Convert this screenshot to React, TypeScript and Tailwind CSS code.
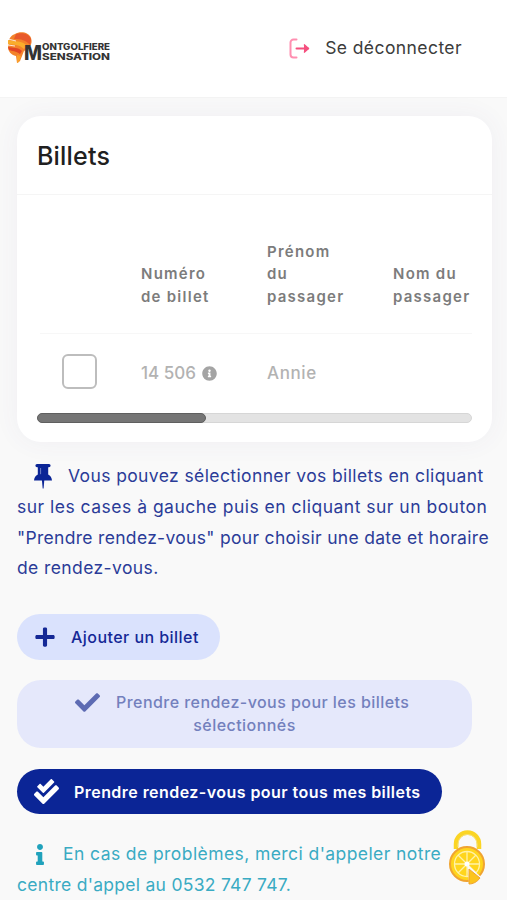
import React from "react";
import {
  FaCheck,
  FaCheckDouble,
  FaInfo,
  FaInfoCircle,
  FaPlus,
} from "react-icons/fa";

const Logo = () => (
  <svg width="105" height="36" viewBox="0 0 105 36" role="img">
    <path d="M8 3C13 0 22 1 24 7c1 3 1 6-2 10l-5 3-4 10-3 2-1-7C4 24 1 20 1 16l1-6C2 7 5 4 8 3Z" fill="#f3822a" />
    <path d="M9 3c7-2 13 0 15 5l-1 6C19 9 14 8 7 8Z" fill="#e8592a" />
    <path d="M1 9c7 2 14 0 19 6l-3 3C12 13 6 14 1 13Z" fill="#f9ad2c" />
    <path d="M1 16c5 1 10 0 14 4l-2 3C9 20 5 20 2 19Z" fill="#e14525" />
    <path d="m10 24 4 1-2 6-2 1Z" fill="#f9a02c" />
    <path d="m1 8 8 2M1 14l7 1" stroke="#fff" strokeWidth="0.8" />
    <g fill="#343434" fontFamily="Inter, sans-serif" fontWeight="800">
      <text x="17" y="29" fontSize="20" textLength="18" lengthAdjust="spacingAndGlyphs">
        M
      </text>
      <text x="35" y="19" fontSize="8.8" textLength="68" lengthAdjust="spacingAndGlyphs">
        ONTGOLFIERE
      </text>
      <text x="35" y="29" fontSize="8.8" textLength="68" lengthAdjust="spacingAndGlyphs">
        SENSATION
      </text>
    </g>
  </svg>
);

const LogoutIcon = () => (
  <svg width="21" height="21" viewBox="0 0 21 21" fill="none">
    <path
      d="M7.5 1.5H4.5a3 3 0 0 0-3 3v12a3 3 0 0 0 3 3h3"
      stroke="#ff8fb1"
      strokeWidth="2"
      strokeLinecap="round"
    />
    <path d="M7.5 10.5H19" stroke="#f5507f" strokeWidth="2" strokeLinecap="round" />
    <path
      d="m15 6.5 4.5 4-4.5 4"
      fill="#f5507f"
      stroke="#f5507f"
      strokeWidth="1.5"
      strokeLinejoin="round"
    />
  </svg>
);

const PinIcon = () => (
  <svg width="18" height="25" viewBox="0 0 18 25" className="ml-[17px] mr-4" fill="#0b2596">
    <path d="M3 0h12a1.5 1.5 0 0 1 0 3.2h-.8v7.3c2.1 1 3.6 3.1 3.8 6H0c.2-2.9 1.7-5 3.8-6V3.2H3A1.5 1.5 0 0 1 3 0Z" />
    <path d="M7.9 16h2.4l-.7 8.5h-.9Z" />
    <path d="M6.6 4v6.2" stroke="#8c99d2" strokeWidth="0.8" />
  </svg>
);

const CookieButton = () => (
  <button aria-label="Cookies" className="absolute left-[448px] top-[828px]">
    <svg width="40" height="60" viewBox="0 0 40 60" fill="none">
      <path d="M8 21v-5a11.5 11.5 0 0 1 23 0v5" stroke="#fbd524" strokeWidth="4.5" />
      <path d="M10 19v-3a9.5 9.5 0 0 1 19 0v3" stroke="#f6e27c" strokeWidth="1" />
      <circle cx="19" cy="36" r="17" fill="#ffd51c" stroke="#f0a431" strokeWidth="2" />
      <g stroke="#fff2a8" strokeWidth="1.3">
        <circle cx="19" cy="36" r="12.5" />
        <path d="M19 23v26M6.5 36h25M10 27l18 18M28 27 10 45" />
      </g>
      <circle cx="19" cy="36" r="2.5" fill="#fff" />
      <path d="m19 36 14 13-3 4-9 2Z" fill="#f9f9f9" />
      <path d="m21 41 11 9c-3 4-7 6-11 6Z" fill="#fcc41d" stroke="#f0a431" />
    </svg>
  </button>
);

const App = () => {
  return (
    <div className="relative h-[900px] w-[507px] overflow-hidden bg-[#f9f9f9] font-['Inter',sans-serif]">
      {/* HEADER */}
      <header className="flex h-[98px] items-start justify-between border-b border-[#f4f4f4] bg-white pl-[7px] pr-[45px] pt-[31px]">
        <Logo />
        <a href="#" className="flex items-center pt-[3px] text-[#3c3c3c]">
          <span className="pt-px">
            <LogoutIcon />
          </span>
          <span className="ml-[15px] whitespace-nowrap text-[17.5px] leading-7 tracking-[0.42px]">
            Se déconnecter
          </span>
        </a>
      </header>

      <main className="px-[17px] pt-[18px]">
        {/* BILLETS */}
        <section className="h-[326px] w-[475px] overflow-hidden rounded-[24px] bg-white shadow-[0_0_26px_rgba(85,65,130,0.06)]">
          <div className="flex h-[79px] items-center border-b border-[#f5f5f5] pl-5 pt-[3px]">
            <h1 className="text-[25px] font-medium tracking-[0.2px] text-[#202020]">Billets</h1>
          </div>

          <div className="ml-[23px] h-[139px] w-[432px] border-b border-[#f7f7f7] pt-[45px]">
            <div className="flex h-[68px] items-end text-[15px] font-semibold leading-[22.3px] tracking-[1.25px] text-[#7c7c7c]">
              <div className="ml-[101px] w-[126px]">
                Numéro
                <br />
                de billet
              </div>
              <div className="w-[126px]">
                Prénom
                <br />
                du
                <br />
                passager
              </div>
              <div className="whitespace-nowrap">
                Nom du
                <br />
                passager
              </div>
            </div>
          </div>

          <div className="flex h-[79px] items-center pl-[45px] text-[17px] font-medium text-[#b2b2b2]">
            <input
              type="checkbox"
              aria-label="Billet 14 506"
              className="-mt-[5px] size-[35px] appearance-none rounded-[6px] border-2 border-[#bdbdbd] bg-white"
            />
            <div className="ml-[44px] flex w-[126px] items-center gap-[6px]">
              <span className="whitespace-nowrap">14 506</span>
              <FaInfoCircle className="size-[15px] text-[#a4a4a4]" />
            </div>
            <span className="tracking-[0.6px]">Annie</span>
          </div>

          <div className="ml-5 h-[10px] w-[435px] rounded-full border border-[#d6d6d6] bg-[#e3e3e3]">
            <div className="-ml-px -mt-px h-[10px] w-[169px] rounded-full border border-[#5f5f5f] bg-[#757575]" />
          </div>
        </section>

        {/* AIDE */}
        <p className="mt-[19px] whitespace-nowrap text-[17.5px] leading-[30.8px] text-[#2b3c98]">
          <span className="flex items-center">
            <PinIcon />
            <span className="tracking-[0.39px]">Vous pouvez sélectionner vos billets en cliquant</span>
          </span>
          <span className="block tracking-[0.49px]">
            sur les cases à gauche puis en cliquant sur un bouton
          </span>
          <span className="block tracking-[0.31px]">
            "Prendre rendez-vous" pour choisir une date et horaire
          </span>
          <span className="block tracking-[0.4px]">de rendez-vous.</span>
        </p>

        {/* ACTIONS */}
        <div className="mt-[30px] flex flex-col items-start tracking-[0.45px]">
          <button className="flex h-[46px] w-[203px] items-center rounded-full bg-[#dae2fd] pl-[17px] text-base font-medium text-[#142896]">
            <FaPlus className="size-[22px]" />
            <span className="ml-[15px] whitespace-nowrap">Ajouter un billet</span>
          </button>

          <button
            disabled
            className="mt-[20px] h-[68px] w-[455px] rounded-[24px] bg-[#e5e8fb] text-base font-medium leading-[23.5px] text-[#7380bd]"
          >
            <span className="flex h-[23.5px] items-center pl-[58px]">
              <FaCheck className="size-[25px] text-[#5d6bb3]" />
              <span className="ml-[16px] whitespace-nowrap">Prendre rendez-vous pour les billets</span>
            </span>
            <span className="block">sélectionnés</span>
          </button>

          <button className="mt-[21px] flex h-[45px] w-[425px] items-center rounded-full bg-[#0b2596] pl-[17px] text-base font-semibold text-white">
            <FaCheckDouble className="size-[25px]" />
            <span className="ml-[15px] whitespace-nowrap">Prendre rendez-vous pour tous mes billets</span>
          </button>
        </div>

        {/* CONTACT */}
        <p className="mt-[25px] whitespace-nowrap text-[17.5px] leading-[30.8px] text-[#3aabc3]">
          <span className="flex items-center">
            <FaInfo className="ml-[17px] mr-[17px] h-[21px] w-[12px] text-[#20a2bc]" />
            <span className="tracking-[0.42px]">En cas de problèmes, merci d'appeler notre</span>
          </span>
          <span className="block tracking-[0.28px]">centre d'appel au 0532 747 747.</span>
        </p>
      </main>

      <CookieButton />
    </div>
  );
};

export default App;
